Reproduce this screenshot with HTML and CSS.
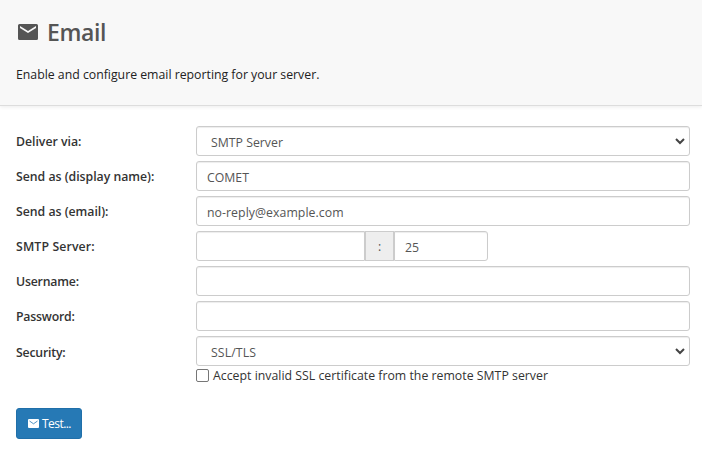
FILE: index.html
```html
<!DOCTYPE html>
<html lang="en">
<head>
<meta charset="utf-8">
<title>Email</title>
<link rel="stylesheet" href="styles.css">
</head>
<body>
<header class="header">
  <h1 class="title"><svg class="title-icon" viewBox="0 0 20 16"><path fill="currentColor" d="M18.500 0h-17Q0 0 0 1.500v13Q0 16 1.500 16h17q1.500 0 1.500-1.500v-13Q20 0 18.500 0zM18 4l-8 5-8-5V2l8 5 8-5z"/></svg><span class="title-text">Email</span></h1>
  <p class="intro">Enable and configure email reporting for your server.</p>
</header>
<main class="form">
  <div class="row"><label class="label">Deliver via:</label><div class="control select"><span>SMTP Server</span><svg class="chevron" viewBox="0 0 10 7"><path d="M1 1l4 4 4-4"/></svg></div></div>
  <div class="row"><label class="label">Send as (display name):</label><div class="control">COMET</div></div>
  <div class="row"><label class="label">Send as (email):</label><div class="control email">no-reply@example.com</div></div>
  <div class="row"><label class="label wide">SMTP Server:</label><div class="group"><div class="control host"></div><div class="addon">:</div><div class="control port">25</div></div></div>
  <div class="row"><label class="label tight">Username:</label><div class="control"></div></div>
  <div class="row"><label class="label tight">Password:</label><div class="control"></div></div>
  <div class="row security"><label class="label tight">Security:</label><div class="control select tls"><span>SSL/TLS</span><svg class="chevron" viewBox="0 0 10 7"><path d="M1 1l4 4 4-4"/></svg></div></div>
  <label class="check"><span class="box"></span><span class="check-text">Accept invalid SSL certificate from the remote SMTP server</span></label>
  <button class="test"><svg class="test-icon" viewBox="0 0 11 9"><rect width="11" height="9" rx="1" fill="currentColor"/><path d="M1.500 2l4 2.800 4-2.800" fill="none" stroke="#2679b5" stroke-width=".8"/></svg><span>Test...</span></button>
</main>
</body>
</html>
```
FILE: styles.css
```css
* { box-sizing: border-box; }
body { margin: 0; background: #fff; color: #333; font: 12.3px/20px "Open Sans", "Noto Sans", sans-serif; }
.header { height: 106px; padding: 16px; background: #f8f8f8; border-bottom: 1px solid #ddd; box-shadow: 0 1px 4px rgba(0,0,0,.08); }
.title { display: flex; align-items: center; margin: 0; height: 32px; font-size: 23px; line-height: 32px; font-weight: 600; color: #555; }
.title-icon { width: 20px; height: 16px; margin: 0 9px 0 2px; }
.title-text { letter-spacing: -.4px; margin-top: -1px; }
.intro { margin: 17px 0 0; color: #222; letter-spacing: -.01px; }
.form { padding: 20px 12px 0 16px; }
.row { display: flex; height: 30px; margin-bottom: 5px; }
.label { width: 180px; line-height: 31px; font-weight: 600; letter-spacing: -.02px; white-space: nowrap; }
.wide { letter-spacing: .12px; }
.tight { letter-spacing: -.2px; }
.control { flex: 1; height: 30px; padding: 0 10px; border: 1px solid #ccc; border-radius: 3px; line-height: 31px; color: #555; background: #fff; box-shadow: inset 0 1px 1px rgba(0,0,0,.075); }
.email { letter-spacing: .05px; }
.select { display: flex; justify-content: space-between; align-items: flex-start; padding: 0 4px 0 14px; line-height: 32px; }
.tls { letter-spacing: .1px; }
.chevron { width: 10px; height: 7px; margin-top: 11px; fill: none; stroke: #444; stroke-width: 2; }
.group { display: flex; width: 292px; }
.host { flex: 0 0 169px; border-radius: 3px 0 0 3px; }
.addon { width: 29px; background: #eee; border: 1px solid #ccc; text-align: center; line-height: 29px; color: #555; }
.port { border-radius: 0 3px 3px 0; }
.security { margin-bottom: 0; }
.security .label { line-height: 33px; }
.check { display: flex; align-items: center; height: 20px; margin-left: 180px; }
.check-text { letter-spacing: .01px; }
.box { width: 13px; height: 13px; border: 1px solid #767676; border-radius: 2px; margin: -1px 4px 0 0; }
.test { display: flex; align-items: center; width: 66px; height: 31px; margin: 22px 0 0; padding: 0 10px; border: 1px solid #206fa9; border-radius: 3px; background: #2679b5; color: #fff; font: inherit; font-size: 12px; letter-spacing: -.55px; }
.test-icon { flex: none; width: 11px; height: 9px; margin: 0 3px 0 1px; }
```
